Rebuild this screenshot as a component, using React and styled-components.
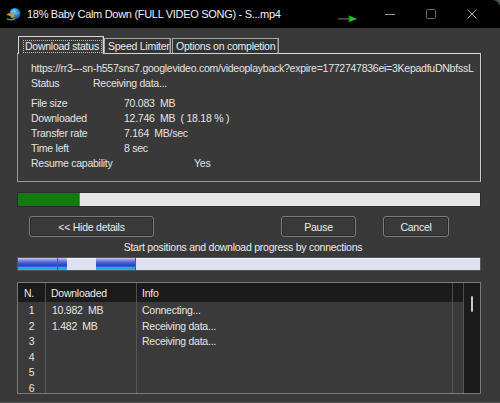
import React from 'react';
import styled, { createGlobalStyle } from 'styled-components';

const Global = createGlobalStyle`
  html, body { margin: 0; padding: 0; background: #4a564a; }
  body { width: 500px; height: 403px; overflow: hidden; }
  * { box-sizing: border-box; }
`;

const Window = styled.div`
  width: 500px;
  height: 403px;
  background: #393939;
  display: flex;
  flex-direction: column;
  border-top-right-radius: 8px;
  overflow: hidden;
  font-family: "Liberation Sans", Arial, sans-serif;
  font-size: 10.5px;
  letter-spacing: -0.25px;
  color: #e4e4e4;
  border-bottom: 1px solid #555;
`;

const TitleBar = styled.div`
  height: 28px;
  flex: none;
  background: #000;
  display: flex;
  align-items: center;
  padding-left: 6px;
  padding-right: 8px;
`;

const TitleText = styled.div`
  margin-left: 6px;
  font-size: 11px;
  letter-spacing: -0.3px;
  color: #f2f2f2;
  white-space: nowrap;
  flex: 1;
`;

const Flag = styled.svg`
  margin-right: 11px;
  margin-top: 10px;
`;

const CaptionBtn = styled.div`
  width: 41px;
  height: 28px;
  display: flex;
  align-items: center;
  justify-content: center;
`;

const Body = styled.div`
  flex: 1;
  display: flex;
  flex-direction: column;
  padding: 8px 19px 0 17px;
`;

const TabRow = styled.div`
  display: flex;
  align-items: flex-end;
  height: 18px;
  padding-left: 1px;
  position: relative;
  z-index: 1;
`;

const Tab = styled.div`
  height: ${p => (p.$active ? 18 : 16)}px;
  width: ${p => p.$w}px;
  margin-right: ${p => p.$mr || 0}px;
  background: ${p => (p.$active ? '#393939' : '#333')};
  border: 1px solid ${p => (p.$active ? '#d6d6d6' : '#a8a8a8')};
  border-bottom: ${p => (p.$active ? 'none' : '1px solid #d6d6d6')};
  box-shadow: inset -1px 0 0 #6a6a6a;
  display: flex;
  align-items: ${p => (p.$active ? 'flex-start' : 'center')};
  padding: ${p => (p.$active ? '3px 2px 0 4px' : '0 0 0 3px')};
  white-space: nowrap;
  color: #ececec;
`;

const Focus = styled.span`
  border: 1px dotted #bdbdbd;
  padding: 0 2px 0 1px;
  line-height: 11px;
`;

const Panel = styled.div`
  height: 129px;
  margin-top: -1px;
  border: 1px solid #9a9a9a;
  border-top-color: #dcdcdc;
  border-right-color: #cfcfcf;
  box-shadow: 1px 0 0 #2a2a2a;
  padding: 7px 0 0 13px;
  display: flex;
  flex-direction: column;
`;

const Line = styled.div`
  height: 15px;
  line-height: 15px;
  display: flex;
  white-space: nowrap;
  overflow: hidden;
  margin-top: ${p => p.$gap || 0}px;
`;

const Label = styled.span`
  width: ${p => p.$w}px;
  flex: none;
`;

const Progress = styled.div`
  margin-top: 10px;
  height: 15px;
  background: #e6e6e6;
  border: 1px solid #2c2c2c;
  display: flex;
`;

const Fill = styled.div`
  background: #117a11;
  border-right: 1px solid #3aa33a;
`;

const ButtonRow = styled.div`
  margin-top: 9px;
  display: flex;
  padding: 0 32px 0 12px;
  gap: 27px;
`;

const Button = styled.div`
  height: 21px;
  width: ${p => p.$w}px;
  margin-right: ${p => (p.$push ? 'auto' : '0')};
  border: 1px solid #7c7c7c;
  border-radius: 3px;
  box-shadow: inset 0 0 0 1px #2b2b2b;
  background: #3a3a3a;
  display: flex;
  align-items: center;
  justify-content: center;
  color: #ececec;
`;

const Caption = styled.div`
  margin-top: 3px;
  height: 14px;
  line-height: 14px;
  text-align: center;
  padding-right: 12px;
  color: #ececec;
`;

const ConnBar = styled.div`
  margin-top: 3px;
  height: 14px;
  border: 1px solid #555;
  background: linear-gradient(to bottom, #f4f6fc 0, #f4f6fc 1px, #dfe3f1 1px, #dfe3f1 100%);
  display: flex;
`;

const Seg = styled.div`
  flex: none;
  display: flex;
  background: ${p =>
    p.$on
      ? 'linear-gradient(to bottom, #c8cff4 0, #8a96e6 15%, #4a5cd4 40%, #2c40c0 62%, #3a66d8 72%, #22aeea 80%, #22aeea 100%)'
      : 'transparent'};
`;

const Marker = styled.div`
  width: 1px;
  background: #e0202a;
  flex: none;
`;

const Table = styled.div`
  margin-top: 11px;
  height: 112px;
  border: 1px solid #7a7a7a;
  display: flex;
`;

const TableMain = styled.div`
  flex: 1;
  display: flex;
  flex-direction: column;
  overflow: hidden;
`;

const cols = '28px 91px 316px 1fr';

const HeadRow = styled.div`
  height: 19px;
  flex: none;
  display: grid;
  grid-template-columns: ${cols};
  background: #1b1b1b;
`;

const HeadCell = styled.div`
  border-right: 1px solid #4e4e4e;
  padding-left: ${p => p.$pl}px;
  display: flex;
  align-items: center;
  color: #ececec;
`;

const Rows = styled.div`
  flex: 1;
  display: grid;
  grid-template-columns: ${cols};
  grid-auto-rows: 15.5px;
  background: #3a3a3a;
  overflow: hidden;
  padding-top: 1px;
`;

const Cell = styled.div`
  border-right: 1px solid #555;
  padding-left: ${p => p.$pl}px;
  text-align: ${p => (p.$center ? 'center' : 'left')};
  line-height: 15px;
  white-space: nowrap;
  color: #e6e6e6;
  margin-top: -1px;
  padding-top: 1px;
`;

const Scroll = styled.div`
  width: 16px;
  flex: none;
  background: #1b1b1b;
  padding: 13px 0 0 7px;
`;

const Thumb = styled.div`
  width: 2px;
  height: 16px;
  border-radius: 1px;
  background: #c8c8c8;
`;

const IdmIcon = () => (
  <svg width="15" height="14" viewBox="0 0 15 14">
    <defs>
      <radialGradient id="g" cx="0.4" cy="0.35" r="0.7">
        <stop offset="0" stopColor="#9be0ff" />
        <stop offset="0.5" stopColor="#2a8ee0" />
        <stop offset="1" stopColor="#1a4aa0" />
      </radialGradient>
    </defs>
    <circle cx="9" cy="6.5" r="5.5" fill="url(#g)" />
    <path d="M7 5 q2 2 6 1.5" stroke="#5cc040" strokeWidth="1.3" fill="none" />
    <path d="M0.5 8 Q2 5 6 7.5 L6.5 6 L8.5 10 L4.5 11 L5.3 9.6 Q2.5 8.3 0.5 8 Z" fill="#e89020" />
    <path d="M1 12 Q4 13.5 9 12" stroke="#3ab030" strokeWidth="1.6" fill="none" />
  </svg>
);

const details = [
  ['File size', '70.083  MB'],
  ['Downloaded', '12.746  MB  ( 18.18 % )'],
  ['Transfer rate', '7.164  MB/sec'],
  ['Time left', '8 sec'],
];

const conns = [
  ['1', '10.982  MB', 'Connecting...'],
  ['2', '1.482  MB', 'Receiving data...'],
  ['3', '', 'Receiving data...'],
  ['4', '', ''],
  ['5', '', ''],
  ['6', '', ''],
];

const segments = [
  { w: 49, on: true, marker: 39 },
  { w: 29, on: false },
  { w: 40, on: true, marker: 39 },
];

export default function App() {
  return (
    <Window>
      <Global />
      <TitleBar>
        <IdmIcon />
        <TitleText>18% Baby Calm Down (FULL VIDEO SONG) - S...mp4</TitleText>
        <Flag width="20" height="8" viewBox="0 0 20 8">
          <rect x="0" y="3" width="12" height="1.6" fill="#4a4a4a" />
          <path d="M11 0.5 L11 7 L19 4 Z" fill="#1ec81e" />
          <path d="M11 0.5 L11 7" stroke="#108010" strokeWidth="1" />
        </Flag>
        <CaptionBtn>
          <svg width="10" height="10" viewBox="0 0 10 10">
            <line x1="0" y1="5.5" x2="10" y2="5.5" stroke="#9a9a9a" strokeWidth="1" />
          </svg>
        </CaptionBtn>
        <CaptionBtn>
          <svg width="10" height="10" viewBox="0 0 10 10">
            <rect x="0.5" y="0.5" width="9" height="9" rx="1" fill="none" stroke="#6a6a6a" strokeWidth="1" />
          </svg>
        </CaptionBtn>
        <CaptionBtn>
          <svg width="10" height="10" viewBox="0 0 10 10">
            <path d="M0.5 0.5 L9.5 9.5 M9.5 0.5 L0.5 9.5" stroke="#b0b0b0" strokeWidth="1" />
          </svg>
        </CaptionBtn>
      </TitleBar>

      <Body>
        <TabRow>
          <Tab $active $w={86}>
            <Focus>Download status</Focus>
          </Tab>
          <Tab $w={67} $mr={1}>Speed Limiter</Tab>
          <Tab $w={107}>Options on completion</Tab>
        </TabRow>
        <Panel>
          <Line>https://rr3---sn-h557sns7.googlevideo.com/videoplayback?expire=1772747836ei=3KepadfuDNbfssL</Line>
          <Line>
            <Label $w={62}>Status</Label>
            <span>Receiving data...</span>
          </Line>
          {details.map(([k, v], i) => (
            <Line key={k} $gap={i === 0 ? 5 : 0}>
              <Label $w={93}>{k}</Label>
              <span style={{ whiteSpace: 'pre' }}>{v}</span>
            </Line>
          ))}
          <Line>
            <Label $w={163}>Resume capability</Label>
            <span>Yes</span>
          </Line>
        </Panel>

        <Progress>
          <Fill style={{ width: '62px' }} />
        </Progress>

        <ButtonRow>
          <Button $w={125} $push>&lt;&lt; Hide details</Button>
          <Button $w={75}>Pause</Button>
          <Button $w={66}>Cancel</Button>
        </ButtonRow>

        <Caption>Start positions and download progress by connections</Caption>

        <ConnBar>
          {segments.map((s, i) => (
            <Seg key={i} $on={s.on} style={{ width: s.w + 'px' }}>
              {s.marker != null && (
                <>
                  <div style={{ width: s.marker + 'px' }} />
                  <Marker />
                </>
              )}
            </Seg>
          ))}
        </ConnBar>

        <Table>
          <TableMain>
            <HeadRow>
              <HeadCell $pl={6}>N.</HeadCell>
              <HeadCell $pl={5}>Downloaded</HeadCell>
              <HeadCell $pl={5}>Info</HeadCell>
              <HeadCell $pl={0} />
            </HeadRow>
            <Rows>
              {conns.map(([n, d, info]) => (
                <React.Fragment key={n}>
                  <Cell $center $pl={0}>{n}</Cell>
                  <Cell $pl={6} style={{ whiteSpace: 'pre' }}>{d}</Cell>
                  <Cell $pl={5}>{info}</Cell>
                  <Cell $pl={0} />
                </React.Fragment>
              ))}
            </Rows>
          </TableMain>
          <Scroll>
            <Thumb />
          </Scroll>
        </Table>
      </Body>
    </Window>
  );
}
